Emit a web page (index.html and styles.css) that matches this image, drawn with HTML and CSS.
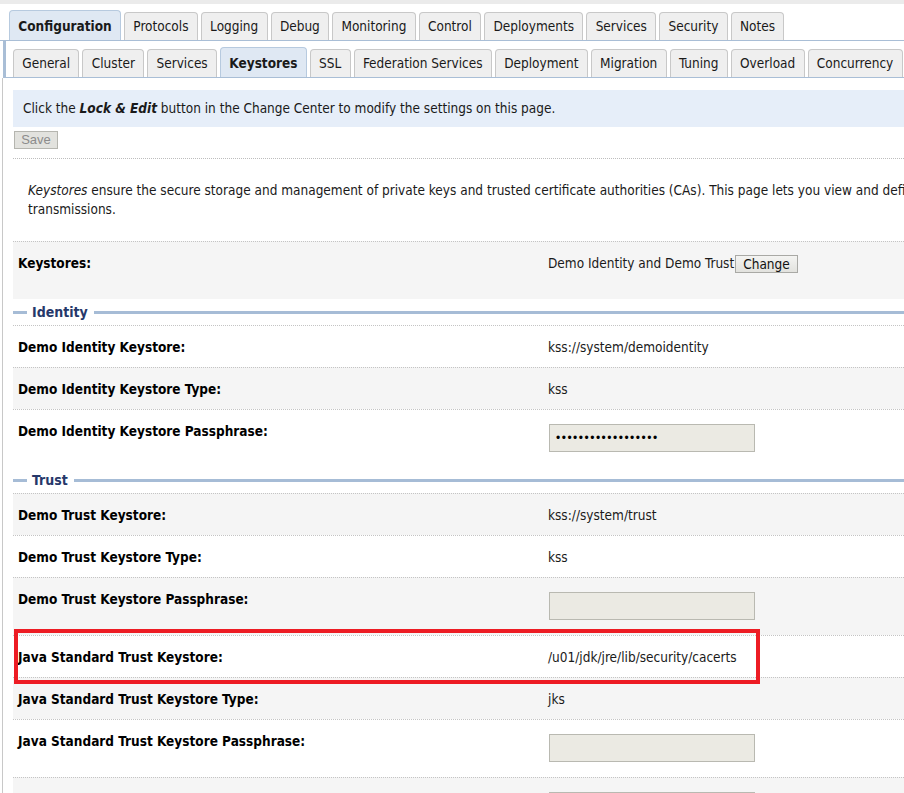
FILE: index.html
```html
<!DOCTYPE html>
<html>
<head>
<meta charset="utf-8">
<title>Keystores</title>
<link rel="stylesheet" href="styles.css">
</head>
<body>
<div class="page">
  <div class="topstrip"></div>
  <div class="tabs1">
    <div class="tab active">Configuration</div>
    <div class="tab">Protocols</div>
    <div class="tab">Logging</div>
    <div class="tab">Debug</div>
    <div class="tab">Monitoring</div>
    <div class="tab">Control</div>
    <div class="tab">Deployments</div>
    <div class="tab">Services</div>
    <div class="tab">Security</div>
    <div class="tab">Notes</div>
  </div>
  <div class="tabs2">
    <div class="tab">General</div>
    <div class="tab">Cluster</div>
    <div class="tab">Services</div>
    <div class="tab active">Keystores</div>
    <div class="tab">SSL</div>
    <div class="tab">Federation Services</div>
    <div class="tab">Deployment</div>
    <div class="tab">Migration</div>
    <div class="tab">Tuning</div>
    <div class="tab">Overload</div>
    <div class="tab">Concurrency</div>
  </div>
  <div class="main">
    <div class="banner">Click the <b><i>Lock &amp; Edit</i></b> button in the Change Center to modify the settings on this page.</div>
    <div class="savebar"><button class="save">Save</button></div>
    <div class="desc"><span class="line"><i>Keystores</i> ensure the secure storage and management of private keys and trusted certificate authorities (CAs). This page lets you view and define various keystore configurations. These settings help you to manage the security of message</span><br><span class="line">transmissions.</span></div>

    <div class="row alt ks">
      <div class="label">Keystores:</div>
      <div class="value">Demo Identity and Demo Trust<button class="change">Change</button></div>
    </div>

    <div class="legend"><span>Identity</span></div>
    <div class="row">
      <div class="label">Demo Identity Keystore:</div>
      <div class="value">kss://system/demoidentity</div>
    </div>
    <div class="row alt">
      <div class="label">Demo Identity Keystore Type:</div>
      <div class="value">kss</div>
    </div>
    <div class="row pass">
      <div class="label">Demo Identity Keystore Passphrase:</div>
      <div class="value"><div class="field">••••••••••••••••••</div></div>
    </div>

    <div class="legend"><span>Trust</span></div>
    <div class="row alt">
      <div class="label">Demo Trust Keystore:</div>
      <div class="value">kss://system/trust</div>
    </div>
    <div class="row">
      <div class="label">Demo Trust Keystore Type:</div>
      <div class="value">kss</div>
    </div>
    <div class="row alt pass">
      <div class="label">Demo Trust Keystore Passphrase:</div>
      <div class="value"><div class="field"></div></div>
    </div>
    <div class="row jst">
      <div class="label">Java Standard Trust Keystore:</div>
      <div class="value">/u01/jdk/jre/lib/security/cacerts</div>
      <div class="highlight"></div>
    </div>
    <div class="row alt">
      <div class="label">Java Standard Trust Keystore Type:</div>
      <div class="value">jks</div>
    </div>
    <div class="row pass">
      <div class="label">Java Standard Trust Keystore Passphrase:</div>
      <div class="value"><div class="field"></div></div>
    </div>
    <div class="row alt pass">
      <div class="label"></div>
      <div class="value"><div class="field"></div></div>
    </div>
  </div>
</div>
</body>
</html>
```

FILE: styles.css
```css
html, body {
  margin: 0;
  padding: 0;
  overflow: hidden;
  background: #ffffff;
}

body {
  font-family: "DejaVu Sans Condensed", "Liberation Sans", Arial, sans-serif;
  font-stretch: condensed;
  font-size: 13.5px;
  color: #1a1a1a;
}

.page {
  width: 1700px;
}

.topstrip {
  height: 4px;
  background: #ebebeb;
}

.tabs1 {
  display: flex;
  align-items: flex-end;
  gap: 3px;
  padding: 6px 0 0 9px;
  height: 30px;
  border-bottom: 1px solid #a9bed6;
}

.tabs2 {
  display: flex;
  align-items: flex-end;
  gap: 3px;
  margin-left: 3px;
  padding: 6px 0 0 7px;
  height: 30px;
  border-left: 3px solid #a9bed6;
  border-bottom: 1px solid #a9bed6;
}

.tab {
  box-sizing: border-box;
  height: 28px;
  line-height: 27px;
  padding: 0 8.3px;
  background: #efefef;
  border: 1px solid #c8c8c8;
  border-bottom: none;
  border-radius: 4px 4px 0 0;
  color: #1a1a1a;
  white-space: nowrap;
}

.tab.active {
  height: 30px;
  line-height: 30px;
  font-weight: bold;
  background: #dfe8f3;
  border-color: #b7cadf;
}

.main {
  margin-left: 2px;
  border-left: 1px solid #c8c8c8;
  padding: 12px 0 0 10px;
}

.banner {
  height: 37px;
  line-height: 37px;
  padding-left: 10px;
  background: #e6eef9;
  color: #1a1a1a;
}

.savebar {
  padding: 4px 0 9px 1px;
  border-bottom: 1px dotted #bdbdbd;
}

.save {
  display: block;
  box-sizing: border-box;
  width: 44px;
  height: 18px;
  padding: 0;
  margin: 0;
  font-family: "Liberation Sans", Arial, sans-serif;
  font-size: 13px;
  line-height: 16px;
  color: #8c8c8c;
  background: #e2e2de;
  border: 1px solid #b5b5af;
}

.desc {
  padding: 22px 15px 22px 15px;
  line-height: 19px;
  color: #1a1a1a;
}

.desc .line {
  white-space: nowrap;
}

.row {
  position: relative;
  display: grid;
  grid-template-columns: 535px 1fr;
  align-items: start;
  border-top: 1px dotted #c4c4c4;
  padding: 13px 0 12px 0;
  line-height: 16px;
  background: #ffffff;
}

.row.alt {
  background: #f5f5f5;
}

.row.ks {
  padding-bottom: 28px;
}

.row.pass {
  padding-bottom: 15px;
}

.row.jst {
  z-index: 2;
}

.label {
  padding-left: 5px;
  font-weight: bold;
  color: #000000;
}

.value {
  display: flex;
  align-items: center;
  color: #1a1a1a;
}

.change {
  box-sizing: border-box;
  height: 18px;
  margin: 0 0 -2px 1px;
  padding: 0 7px;
  font-family: inherit;
  font-stretch: condensed;
  font-size: 13.5px;
  line-height: 16px;
  color: #111;
  background: linear-gradient(#f4f4f2, #e2e2de);
  border: 1px solid #a9a9a5;
}

.field {
  box-sizing: border-box;
  width: 206px;
  height: 28px;
  margin: 1px 0 0 1px;
  padding: 0 6px;
  line-height: 26px;
  background: #ebeae3;
  border: 1px solid #b9b9b1;
  font-family: "Liberation Sans", Arial, sans-serif;
  font-size: 12px;
  letter-spacing: 1.5px;
  color: #000;
}

.legend {
  display: flex;
  align-items: center;
  height: 26px;
}

.legend::before {
  content: "";
  width: 14px;
  height: 3px;
  background: #a6bcd6;
}

.legend::after {
  content: "";
  flex: 1;
  height: 3px;
  background: #a6bcd6;
}

.legend span {
  padding: 0 6px 0 5px;
  font-size: 14px;
  font-weight: bold;
  color: #26386a;
  line-height: 18px;
}

.highlight {
  position: absolute;
  top: -7px;
  left: 1px;
  box-sizing: border-box;
  width: 746px;
  height: 55px;
  border: 4px solid #ed1c24;
  pointer-events: none;
  z-index: 3;
}
```
